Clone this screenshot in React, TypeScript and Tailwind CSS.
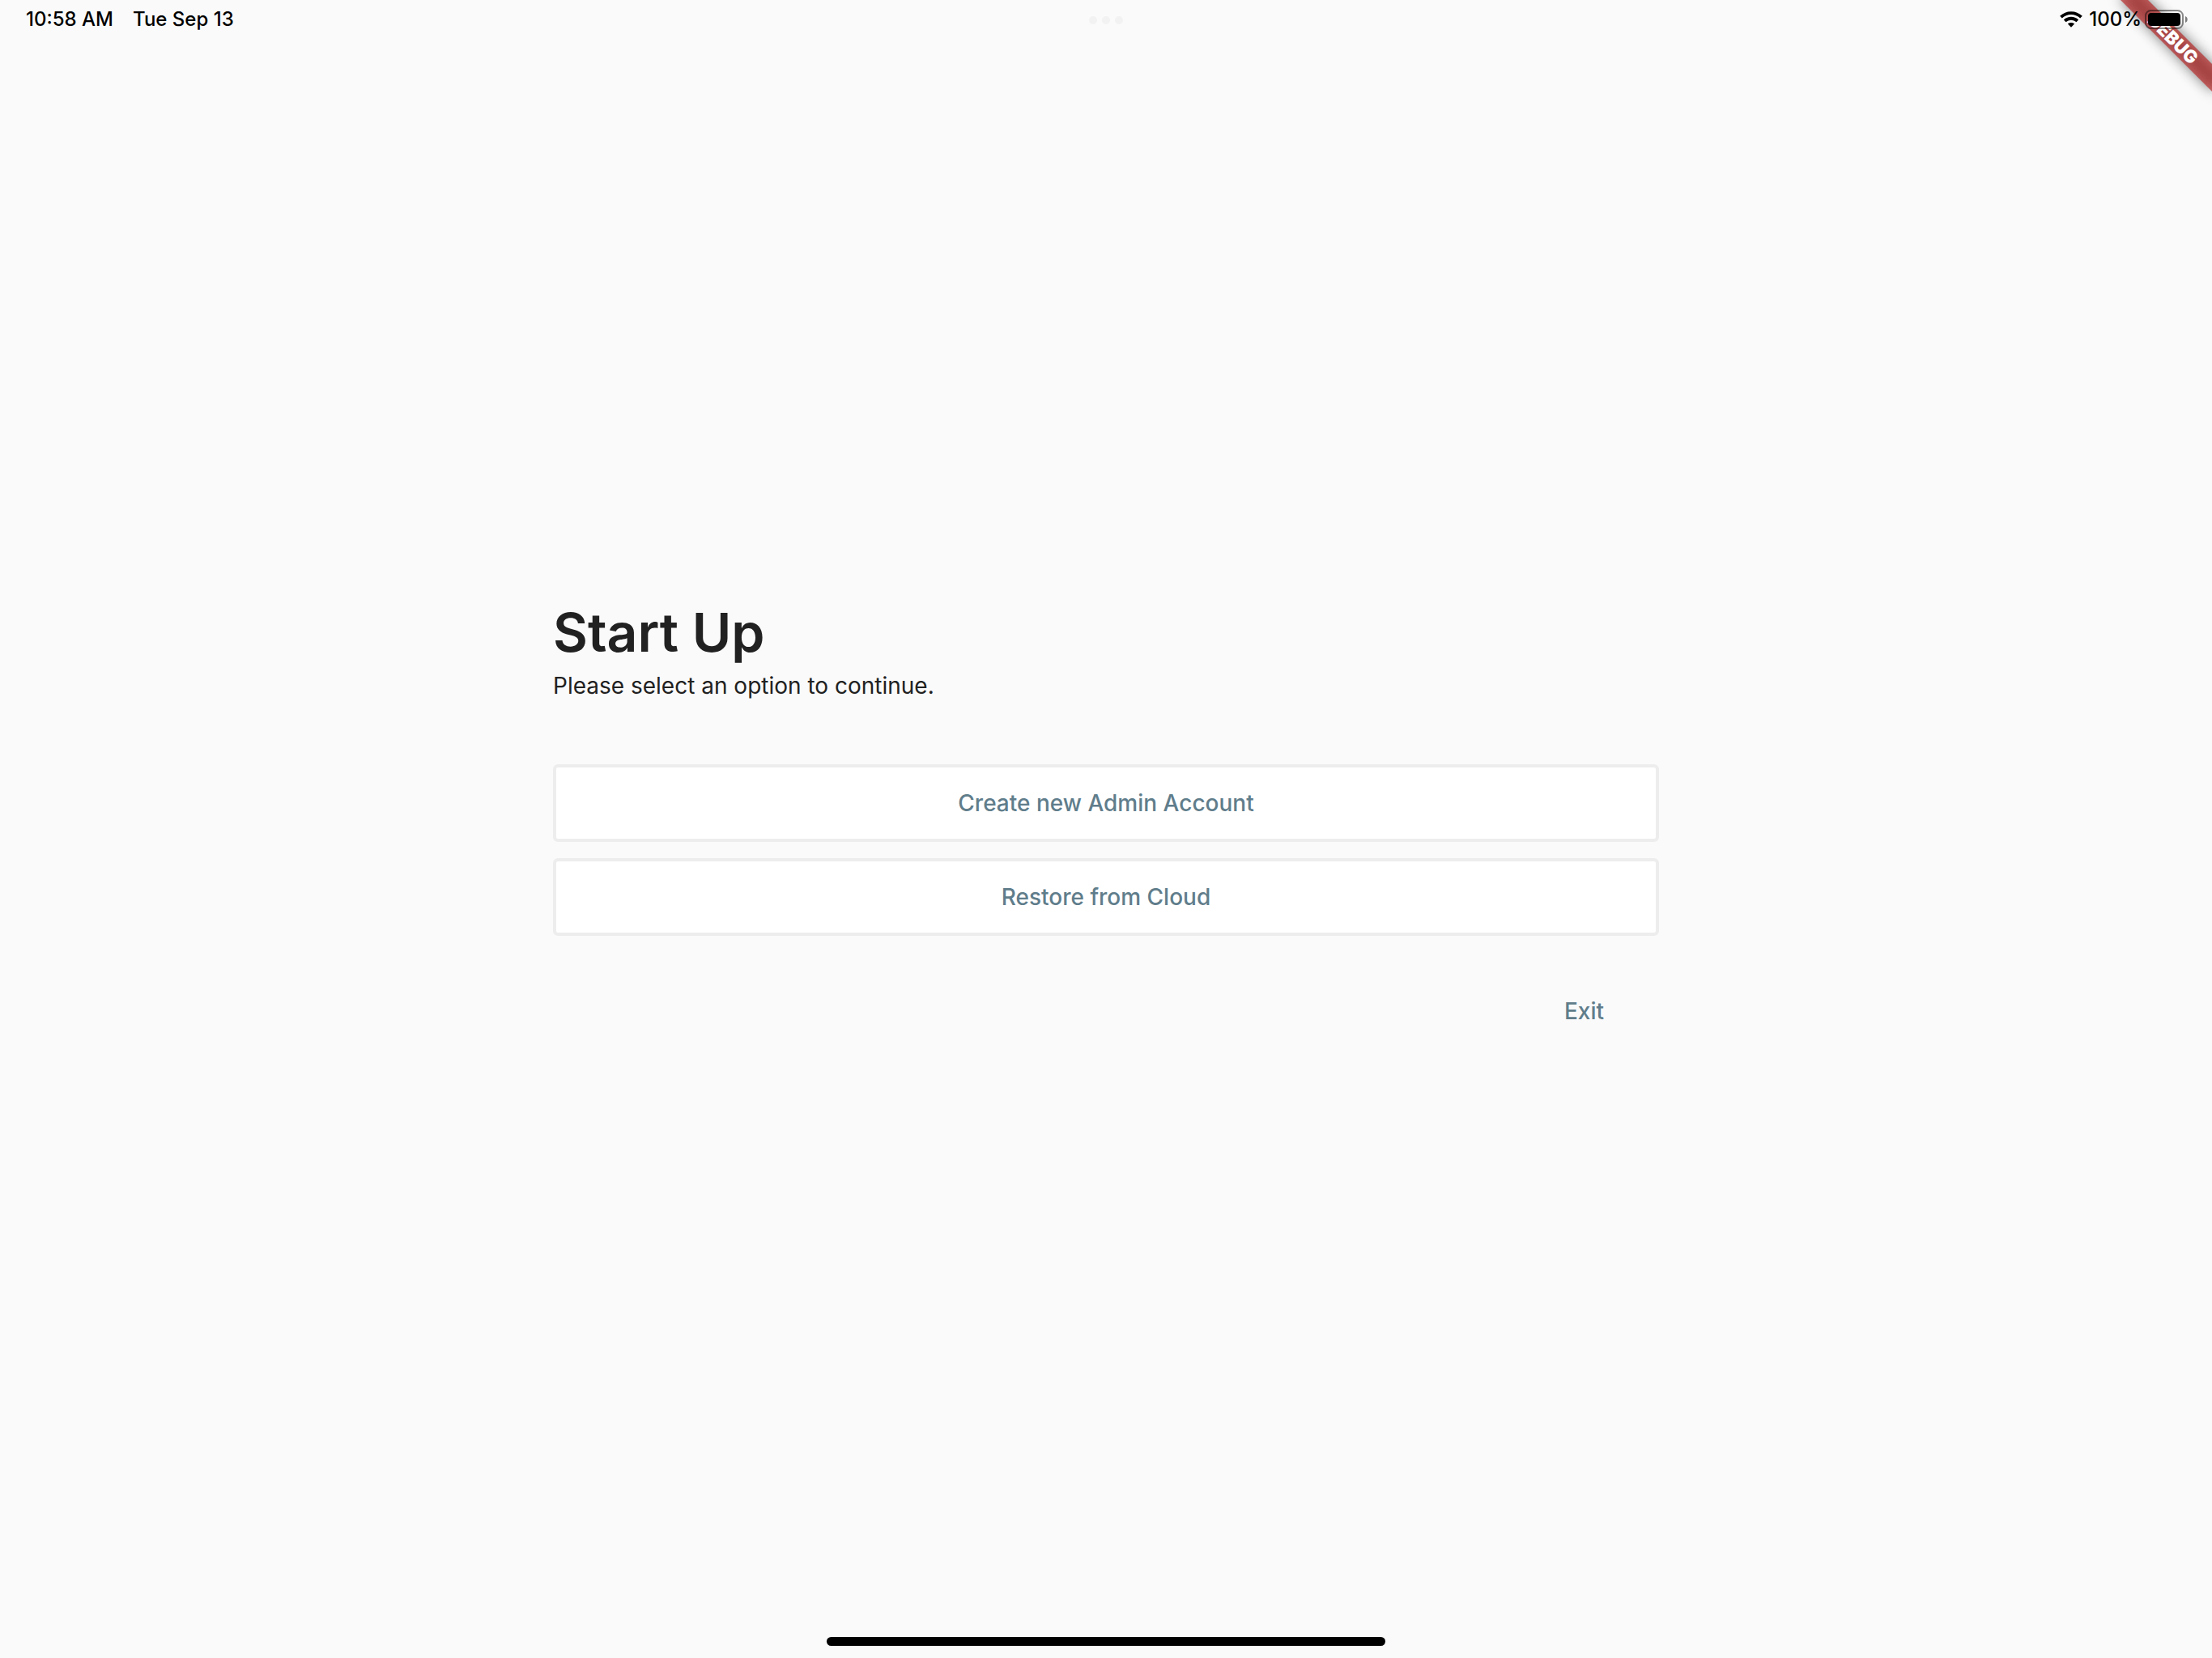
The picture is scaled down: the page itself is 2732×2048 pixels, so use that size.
const options = ["Create new Admin Account", "Restore from Cloud"];

function WifiIcon() {
  return (
    <svg className="h-5 w-7" viewBox="0 0 28 20" fill="none" aria-hidden="true">
      <path d="M1.5 7.2C8.4.4 19.6.4 26.5 7.2" stroke="#000" strokeWidth="3.8" />
      <path d="M6.2 11.9C10.6 7.7 17.4 7.7 21.8 11.9" stroke="#000" strokeWidth="3.8" />
      <path d="M14 19.8 9.9 15.6C12.2 13.6 15.8 13.6 18.1 15.6Z" fill="#000" />
    </svg>
  );
}

function BatteryIcon() {
  return (
    <svg className="h-6 w-[53px]" viewBox="0 0 53 24" fill="none" aria-hidden="true">
      <rect x="1" y="1" width="46" height="22" rx="6.5" stroke="#000" strokeOpacity="0.45" strokeWidth="2" />
      <rect x="4" y="4" width="40" height="16" rx="4" fill="#000" />
      <path d="M50 8c3.6 1.2 3.6 6.8 0 8z" fill="#000" fillOpacity="0.5" />
    </svg>
  );
}

function DebugRibbon() {
  return (
    <div className="pointer-events-none absolute top-0 right-0 flex size-24 items-center justify-center">
      <div className="relative flex h-6 w-40 shrink-0 rotate-45 items-center justify-center">
        <div className="absolute inset-0 bg-black/50 blur-[8px]" />
        <div className="absolute inset-0 bg-[#b71c1c]/63" />
        <span className="relative text-[22px] leading-6 font-black text-white">DEBUG</span>
      </div>
    </div>
  );
}

export default function App() {
  return (
    <div className="relative flex min-h-screen flex-col overflow-hidden bg-[#fafafa] font-['Inter',sans-serif] text-[#212121]">
      <DebugRibbon />
      <header className="relative grid h-12 grid-cols-3 items-center px-[30px] text-[24px] leading-8 font-medium text-black">
        <div className="flex gap-6 pl-0.5">
          <span>10:58 AM</span>
          <span>Tue Sep 13</span>
        </div>
        <div className="flex justify-center gap-1.5 pt-0.5">
          <span className="size-2.5 rounded-full bg-[#f2f2f2]" />
          <span className="size-2.5 rounded-full bg-[#f2f2f2]" />
          <span className="size-2.5 rounded-full bg-[#f2f2f2]" />
        </div>
        <div className="flex items-center justify-end">
          <WifiIcon />
          <span className="mr-1 ml-2">100%</span>
          <BatteryIcon />
        </div>
      </header>

      <main className="mx-auto flex w-1/2 grow flex-col justify-center pb-8">
        <h1 className="mb-1.5 text-[66px] leading-[80px] font-semibold">Start Up</h1>
        <p className="text-[28px] leading-10">Please select an option to continue.</p>
        <div className="mt-[77px] flex flex-col gap-5">
          {options.map((label) => (
            <button
              key={label}
              type="button"
              className="h-24 rounded-md border-4 border-[#ededed] bg-white text-[28px] font-medium text-[#607d8b]"
            >
              {label}
            </button>
          ))}
        </div>
        <button type="button" className="mt-[45px] mr-11 self-end px-6 py-8 text-[28px] leading-8 font-medium text-[#607d8b]">
          Exit
        </button>
      </main>

      <footer className="flex justify-center pb-[15px]">
        <div className="h-[11px] w-[690px] rounded-full bg-black" />
      </footer>
    </div>
  );
}
